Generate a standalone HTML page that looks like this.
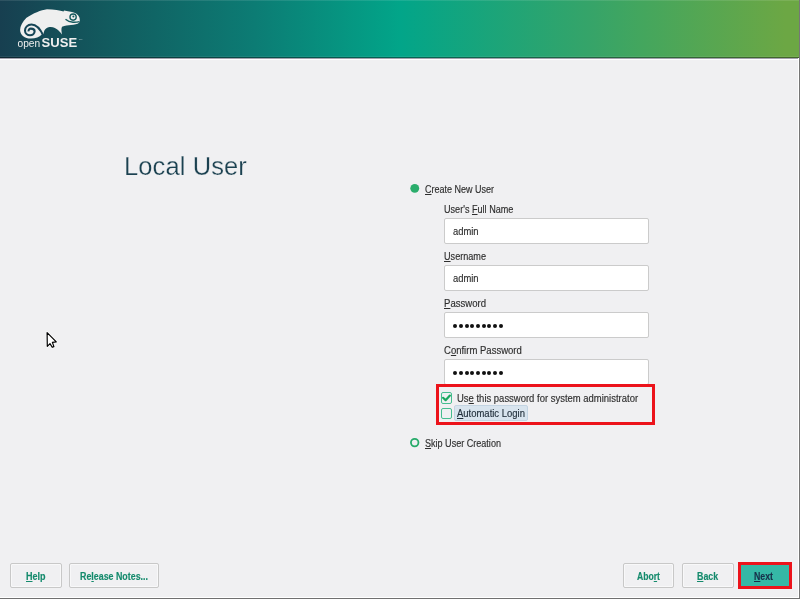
<!DOCTYPE html>
<html><head><meta charset="utf-8">
<style>
*{margin:0;padding:0;box-sizing:border-box}
html,body{width:800px;height:599px;overflow:hidden;background:#f0f0f2;font-family:"Liberation Sans",sans-serif}
#root{position:absolute;left:0;top:0;width:800px;height:599px;background:#f0f0f2;will-change:transform;overflow:hidden}
.abs{position:absolute}
#hdr{left:0;top:0;width:800px;height:58px;background:linear-gradient(to right,#173f50 0px,#125a5e 105px,#0c7c74 255px,#02a589 400px,#37a468 595px,#43a65e 640px,#6ca744 785px,#6ca744 800px)}
#hline{left:0;top:57px;width:800px;height:1px;background:rgba(0,0,0,0.38)}
#hl2{left:0;top:58px;width:800px;height:1px;background:#a3a1ad}
#hl3{left:0;top:59px;width:800px;height:1px;background:#ffffff}
#rw{left:798px;top:58px;width:1px;height:540px;background:#fff}
#rg{left:799px;top:0;width:1px;height:599px;background:#767676}
#bw{left:0;top:597px;width:799px;height:1px;background:#fff}
#bg{left:0;top:598px;width:800px;height:1px;background:#707070}
.t,.bt{position:absolute;white-space:nowrap;line-height:10px;font-size:10px;transform-origin:0 0;-webkit-text-stroke:0.15px currentColor}
.t{color:#2e2e2e}
.bt{font-weight:bold;color:#148a6c}
.u{text-decoration:underline;text-underline-offset:1px}
.inp{position:absolute;left:444px;width:205px;height:26px;background:#fff;border:1px solid #cbcbcb;border-radius:2px}
.btn{position:absolute;top:563px;height:25px;border:1px solid #c8c8c8;background:#f0f0f2;border-radius:2px;box-shadow:inset 0 0 0 1px #f8f8f9}
.dot{position:absolute;width:4px;height:4px;border-radius:50%;background:#111}
</style></head>
<body>
<div id="root">
<div id="hdr" class="abs"></div>
<div id="hline" class="abs"></div>
<div class="abs" style="left:0;top:0;width:800px;height:1px;background:rgba(255,255,255,0.1)"></div>
<div class="abs" style="left:0;top:56px;width:800px;height:1px;background:rgba(255,255,255,0.07)"></div>
<div id="hl2" class="abs"></div>
<div id="hl3" class="abs"></div>
<div id="rw" class="abs"></div>
<div id="rg" class="abs"></div>
<div id="bw" class="abs"></div>
<div id="bg" class="abs"></div>
<svg class="abs" style="left:0;top:0" width="100" height="57" viewBox="0 0 100 57">
  <path fill="#efefef" d="M43.5 34.2 C44 31 44.5 28.5 48.5 27.2 C52.5 26.3 56 28 58 30 C59.5 31.5 61 33 62 34.4 C61.5 31.5 61 29 62 26.8 C65 25.6 68 25.2 71 25.1 C74.5 24.8 77.5 24.2 79 22.8 C80.2 21.5 79.9 19 79.2 17 C78 14.2 75.5 12.6 72 11.9 C69.5 11.3 66.5 10.8 64 10.4 L63.6 11.6 C60 10.5 54 9.5 47 9.3 C41 10 33 13.5 26.5 17.8 C22.5 22 20.1 26 20.1 30 C20.1 35 25 38.6 30.5 38.6 C35.5 38.7 39.5 37 41.5 34.8 Z"/>
  <path fill="none" stroke="#164556" stroke-width="2.1" d="M43.5 36 C41 30.5 37 24.5 31.5 24.5 C27.5 24.5 25 27.5 25 30.5 C25 33.5 27.5 35.3 30 35.3 C32.5 35.3 34.6 33.5 34.6 31.2 C34.6 29.2 32.7 28.6 30.9 28.6 C29.3 28.6 28.4 29.9 28.6 31.3"/>
  <circle cx="73.1" cy="17.1" r="3.15" fill="none" stroke="#135a5e" stroke-width="1.35"/>
  <circle cx="73.35" cy="16.6" r="1.0" fill="#135a5e"/>
  <path fill="none" stroke="#135a5e" stroke-width="1.4" d="M65.5 19.2 C67.5 21 70 21.9 73 22.2 C75.5 22.3 77.5 22.1 79.5 21.6"/>
  <text x="17.5" y="46.6" font-family="Liberation Sans" font-size="11.3" fill="#efefef" textLength="22.6" lengthAdjust="spacingAndGlyphs">open</text>
  <text x="41.6" y="46.6" font-family="Liberation Sans" font-weight="bold" font-size="12.2" fill="#efefef" textLength="35.5" lengthAdjust="spacingAndGlyphs">SUSE</text>
  <text x="78.8" y="39.5" font-family="Liberation Sans" font-size="2.5" fill="#bfcfd0">TM</text>
</svg>

<div class="abs" style="left:124px;top:153px;white-space:nowrap;font-size:25.5px;line-height:26px;letter-spacing:0.1px;color:#1b4150;-webkit-text-stroke:0.25px #f0f0f2">Local User</div>
<svg class="abs" style="left:400px;top:175px" width="30" height="30" viewBox="400 175 30 30"><circle cx="414.75" cy="188.35" r="4.45" fill="#2aad6c"/></svg>
<div class="inp" style="top:218px"></div>
<div class="inp" style="top:265px"></div>
<div class="inp" style="top:312px"></div>
<div class="inp" style="top:359px"></div>
<div class="abs" style="left:436px;top:384px;width:219px;height:41px;border:3px solid #ec131b"></div>
<div class="abs" style="left:441px;top:392px;width:11.4px;height:11.8px;border:1.2px solid #45bd90;border-radius:2px"></div>
<svg class="abs" style="left:436px;top:388px" width="20" height="20" viewBox="436 388 20 20"><path d="M443.1 397.8 L445.6 400.2 L449.9 395.6" fill="none" stroke="#1aa860" stroke-width="2.2" stroke-linecap="round" stroke-linejoin="round"/></svg>
<div class="abs" style="left:441px;top:407.5px;width:11.4px;height:11.6px;border:1.2px solid #45bd90;border-radius:2px"></div>
<div class="abs" style="left:454px;top:405px;width:74px;height:16px;background:#d8e4ee;border:1px solid #c3d4e2;border-radius:2px"></div>
<svg class="abs" style="left:400px;top:430px" width="30" height="30" viewBox="400 430 30 30"><circle cx="414.7" cy="442.6" r="3.75" fill="none" stroke="#27ab6a" stroke-width="1.8"/></svg>
<svg class="abs" style="left:44px;top:330px" width="16" height="20" viewBox="0 0 16 20">
  <path d="M3.1 2.6 L3.3 16.3 L6 13.6 L8.2 17.3 L9.9 16.6 L8.4 12.4 L12.3 11.9 Z" fill="#fff" stroke="#fff" stroke-width="2.6" stroke-linejoin="round" opacity="0.8"/>
  <path d="M3.1 2.6 L3.3 16.3 L6 13.6 L8.2 17.3 L9.9 16.6 L8.4 12.4 L12.3 11.9 Z" fill="#fff" stroke="#000" stroke-width="1.2" stroke-linejoin="round"/>
</svg>
<div class="btn" style="left:10px;width:52px"></div>
<div class="btn" style="left:69px;width:90px"></div>
<div class="btn" style="left:623px;width:51px"></div>
<div class="btn" style="left:682px;width:52px"></div>
<div class="abs" style="left:738px;top:562px;width:54px;height:27px;border:3px solid #ec131b;background:#35b8a6"></div>
<div class="dot" style="left:453.25px;top:323.60px"></div>
<div class="dot" style="left:458.94px;top:323.60px"></div>
<div class="dot" style="left:464.63px;top:323.60px"></div>
<div class="dot" style="left:470.32px;top:323.60px"></div>
<div class="dot" style="left:476.01px;top:323.60px"></div>
<div class="dot" style="left:481.70px;top:323.60px"></div>
<div class="dot" style="left:487.39px;top:323.60px"></div>
<div class="dot" style="left:493.08px;top:323.60px"></div>
<div class="dot" style="left:498.77px;top:323.60px"></div>
<div class="dot" style="left:453.25px;top:370.60px"></div>
<div class="dot" style="left:458.94px;top:370.60px"></div>
<div class="dot" style="left:464.63px;top:370.60px"></div>
<div class="dot" style="left:470.32px;top:370.60px"></div>
<div class="dot" style="left:476.01px;top:370.60px"></div>
<div class="dot" style="left:481.70px;top:370.60px"></div>
<div class="dot" style="left:487.39px;top:370.60px"></div>
<div class="dot" style="left:493.08px;top:370.60px"></div>
<div class="dot" style="left:498.77px;top:370.60px"></div>
<div class="t" style="left:424.50px;top:185px;transform:scaleX(0.9);"><span class="u">C</span>reate New User</div>
<div class="t" style="left:444.00px;top:205px;transform:scaleX(0.908);">User's <span class="u">F</span>ull Name</div>
<div class="t" style="left:453.00px;top:227px;transform:scaleX(0.94);">admin</div>
<div class="t" style="left:444.25px;top:252px;transform:scaleX(0.91);"><span class="u">U</span>sername</div>
<div class="t" style="left:453.00px;top:274px;transform:scaleX(0.94);">admin</div>
<div class="t" style="left:444.40px;top:299px;transform:scaleX(0.956);"><span class="u">P</span>assword</div>
<div class="t" style="left:443.90px;top:346px;transform:scaleX(0.952);">C<span class="u">o</span>nfirm Password</div>
<div class="t" style="left:456.70px;top:394px;transform:scaleX(0.947);">Us<span class="u">e</span> this password for system administrator</div>
<div class="t" style="left:456.70px;top:409px;transform:scaleX(0.947);color:#22303c;"><span class="u">A</span>utomatic Login</div>
<div class="t" style="left:424.70px;top:439px;transform:scaleX(0.905);"><span class="u">S</span>kip User Creation</div>
<div class="bt" style="left:26.25px;top:572px;transform:scaleX(0.9);"><span class="u">H</span>elp</div>
<div class="bt" style="left:79.80px;top:572px;transform:scaleX(0.886);">Re<span class="u">l</span>ease Notes...</div>
<div class="bt" style="left:637.00px;top:572px;transform:scaleX(0.86);">Abo<span class="u">r</span>t</div>
<div class="bt" style="left:697.10px;top:572px;transform:scaleX(0.883);"><span class="u">B</span>ack</div>
<div class="bt" style="left:753.60px;top:572px;transform:scaleX(0.877);color:#17304a;"><span class="u">N</span>ext</div>
</div>
</body></html>
